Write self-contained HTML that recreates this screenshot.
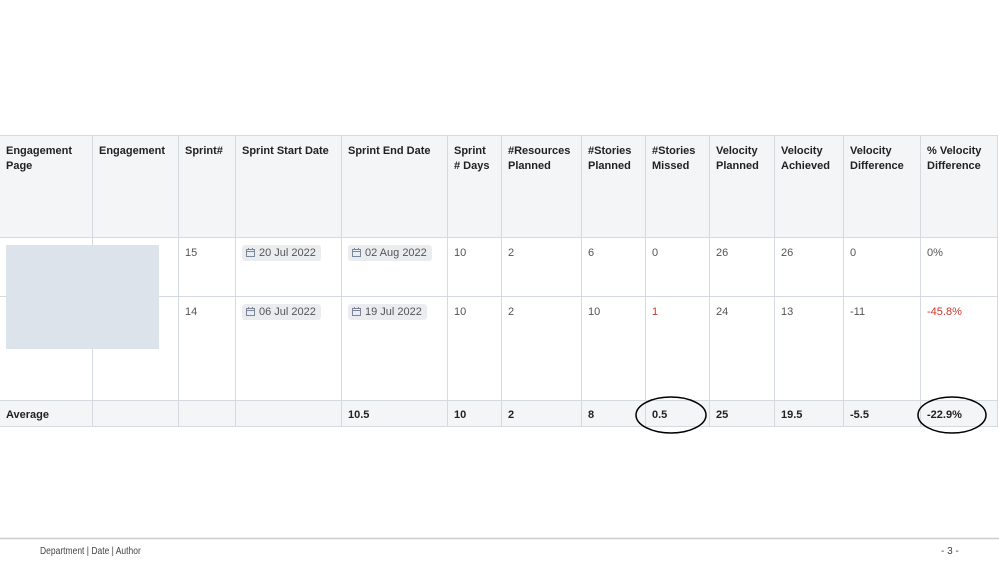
<!DOCTYPE html>
<html><head><meta charset="utf-8"><style>
*{margin:0;padding:0;box-sizing:border-box}
body{width:999px;height:562px;background:#fff;position:relative;overflow:hidden;font-family:"Liberation Sans",sans-serif;font-size:11px;color:#222}
.c{position:absolute;border-right:1px solid #d5d9e0;border-bottom:1px solid #d5d9e0;padding:8px 7px 8px 6px;line-height:15px}
.h{background:#f4f5f7;font-weight:bold;color:#222}
.d{color:#555}
.a{background:#f4f5f7;font-weight:bold;padding-top:7px;color:#222}
.red{color:#c9372c}
.date{display:inline-block;background:#ebecf0;border-radius:3px;padding:0 5px 0 4px;color:#555;line-height:16px;margin-top:-1px}
.date svg{vertical-align:-1px;margin-right:4px}
</style></head><body>
<div id="t"></div>
<div style="position:absolute;left:6px;top:245px;width:153px;height:104px;background:#dde3ea"></div>
<svg style="position:absolute;left:0;top:0" width="999" height="562">
<ellipse cx="671" cy="415" rx="35" ry="18" fill="none" stroke="#000" stroke-width="1.5"/>
<ellipse cx="952" cy="415" rx="34" ry="18" fill="none" stroke="#000" stroke-width="1.5"/>
<line x1="0" y1="538.5" x2="999" y2="538.5" stroke="#ccc" stroke-width="1.5"/>
</svg>
<div style="position:absolute;left:40px;top:546px;font-size:10px;color:#444;transform:scaleX(.85);transform-origin:left">Department | Date | Author</div>
<div style="position:absolute;left:941px;top:546px;font-size:10px;color:#444">- 3 -</div>
<script>
var xs=[0,92,178,235,341,447,501,581,645,709,774,843,920,997];
var ys=[135,238,297,401,427];
var cal='<svg width="9" height="9" viewBox="0 0 9 9"><rect x="0.5" y="1.5" width="8" height="7" fill="none" stroke="#7a869a"/><line x1="0.5" y1="3.5" x2="8.5" y2="3.5" stroke="#7a869a"/><line x1="2.5" y1="0" x2="2.5" y2="2" stroke="#7a869a"/><line x1="6.5" y1="0" x2="6.5" y2="2" stroke="#7a869a"/></svg>';
function dt(s){return '<span class="date">'+cal+s+'</span>'}
var rows=[
["Engagement Page","Engagement","Sprint#","Sprint Start Date","Sprint End Date","Sprint # Days","#Resources Planned","#Stories Planned","#Stories Missed","Velocity Planned","Velocity Achieved","Velocity Difference","% Velocity Difference"],
["","","15",dt("20 Jul 2022"),dt("02 Aug 2022"),"10","2","6","0","26","26","0","0%"],
["","","14",dt("06 Jul 2022"),dt("19 Jul 2022"),"10","2","10",'<span class="red">1</span>',"24","13","-11",'<span class="red">-45.8%</span>'],
["Average","","","","10.5","10","2","8","0.5","25","19.5","-5.5","-22.9%"]];
var cls=["h","d","d","a"];var h="";
for(var r=0;r<4;r++)for(var c=0;c<13;c++){
var l=c==0?0:xs[c]+1;
h+='<div class="c '+cls[r]+'" style="left:'+l+'px;top:'+ys[r]+'px;width:'+(xs[c+1]+1-l)+'px;height:'+(ys[r+1]-ys[r])+'px;border-top:'+(r==0?'1px solid #d5d9e0':'0')+'">'+rows[r][c]+'</div>';}
document.getElementById('t').innerHTML=h;
</script>
</body></html>
